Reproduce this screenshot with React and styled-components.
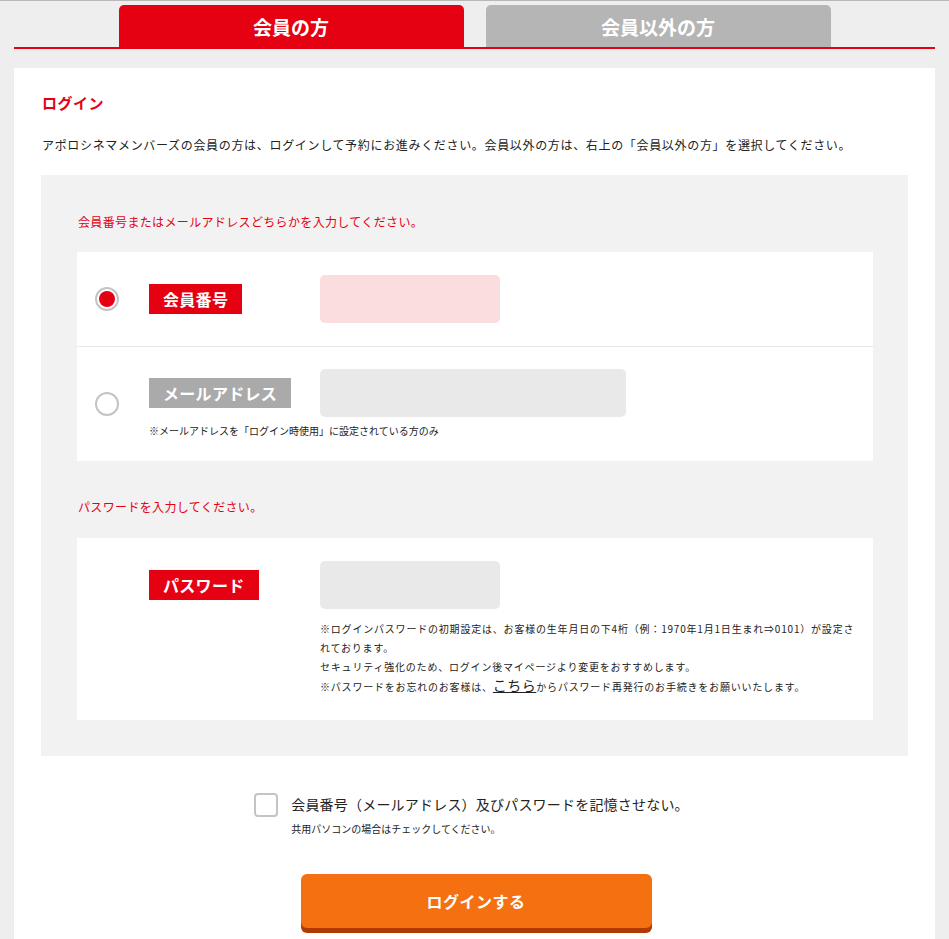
import styled, { createGlobalStyle } from "styled-components";

const GlobalStyle = createGlobalStyle`
  html, body {
    margin: 0;
    padding: 0;
    background: #eeeeee;
    font-family: "Noto Sans CJK JP", "Noto Sans", sans-serif;
    color: #222;
  }
  * { box-sizing: border-box; }
`;

const RED = "#e50012";

const Page = styled.div`
  border-top: 1px solid #b8b8b8;
  padding: 0 14px;
`;

const TabBar = styled.div`
  display: flex;
  justify-content: center;
  gap: 22px;
  padding-top: 4px;
  border-bottom: 2px solid ${RED};
`;

const Tab = styled.div`
  width: 345px;
  height: 42px;
  border-radius: 5px 5px 0 0;
  background: ${(p) => (p.$active ? RED : "#b5b5b5")};
  color: #fff;
  font-size: 19px;
  font-weight: 700;
  display: flex;
  align-items: center;
  justify-content: center;
`;

const Card = styled.div`
  margin-top: 19px;
  background: #fff;
  padding: 24px 27px 24px;
`;

const Title = styled.h2`
  margin: 0 0 0 1px;
  font-size: 15px;
  line-height: 22px;
  font-weight: 700;
  letter-spacing: 0.5px;
  color: ${RED};
`;

const Lead = styled.p`
  margin: 21px 0 0 1px;
  font-size: 12px;
  line-height: 20px;
  letter-spacing: 0.67px;
`;

const FormArea = styled.div`
  margin-top: 20px;
  background: #f2f2f2;
  padding: 38px 35px 36px 36px;
`;

const Guide = styled.p`
  margin: ${(p) => p.$top || 0}px 0 0 1px;
  font-size: 12px;
  line-height: 18px;
  letter-spacing: 0.35px;
  color: ${RED};
`;

const Panel = styled.div`
  margin-top: ${(p) => p.$top}px;
  background: #fff;
`;

const Row = styled.div`
  display: flex;
  align-items: center;
  padding: ${(p) => p.$pad || "0"} 0 ${(p) => p.$pad || "0"} 18px;
  min-height: ${(p) => p.$h}px;
  border-bottom: ${(p) => (p.$line ? "1px solid #e8e8e8" : "none")};
`;

const Radio = styled.span`
  width: 24px;
  height: 24px;
  border-radius: 50%;
  border: 2px solid #c4c4c4;
  background: #fff;
  margin-right: 30px;
  flex-shrink: 0;
  display: flex;
  align-items: center;
  justify-content: center;
  &::after {
    content: "";
    width: 16px;
    height: 16px;
    border-radius: 50%;
    background: ${(p) => (p.$checked ? RED : "transparent")};
  }
`;

const Fields = styled.div`
  display: flex;
  flex-direction: column;
`;

const FieldLine = styled.div`
  display: flex;
  align-items: center;
`;

const BadgeCell = styled.div`
  width: 171px;
  flex-shrink: 0;
`;

const Badge = styled.span`
  display: inline-flex;
  align-items: center;
  height: 30px;
  padding: 0 14px;
  background: ${(p) => (p.$off ? "#aaaaaa" : RED)};
  color: #fff;
  font-size: 16px;
  font-weight: 700;
  letter-spacing: 0.3px;
`;

const Input = styled.div`
  width: ${(p) => p.$w}px;
  height: 48px;
  border-radius: 5px;
  background: ${(p) => (p.$pink ? "#fbdcdf" : "#e9e9e9")};
`;

const SmallNote = styled.p`
  margin: 6px 0 0;
  font-size: 10px;
  line-height: 16px;
  color: #222;
`;

const PassBody = styled.div`
  padding: 23px 0 24px 72px;
`;

const Notes = styled.div`
  margin: 10px 0 0 171px;
  width: 538px;
  font-size: 10px;
  line-height: 19px;
  letter-spacing: 0.8px;
  color: #222;
  p { margin: 0; }
`;

const Link = styled.a`
  font-size: 14px;
  color: #222;
  text-decoration: underline;
  letter-spacing: 0.5px;
`;

const Remember = styled.label`
  display: flex;
  justify-content: center;
  margin-top: 37px;
  padding-right: 6px;
  gap: 13px;
`;

const Check = styled.span`
  width: 24px;
  height: 24px;
  border: 2px solid #c4c4c4;
  border-radius: 4px;
  background: #fff;
  flex-shrink: 0;
`;

const RememberText = styled.div`
  display: flex;
  flex-direction: column;
`;

const RememberMain = styled.span`
  font-size: 14px;
  line-height: 22px;
  letter-spacing: 0.2px;
`;

const RememberSub = styled.span`
  margin-top: 7px;
  font-size: 10px;
  line-height: 14px;
`;

const ButtonWrap = styled.div`
  display: flex;
  justify-content: center;
  margin-top: 38px;
  padding-left: 3px;
`;

const LoginButton = styled.button`
  width: 351px;
  height: 54px;
  border: none;
  border-radius: 6px;
  background: #f57010;
  box-shadow: 0 5px 0 #b13a03;
  color: #fff;
  font-family: inherit;
  font-size: 16px;
  font-weight: 700;
  letter-spacing: 0.5px;
`;

export default function App() {
  return (
    <>
      <GlobalStyle />
      <Page>
        <TabBar>
          <Tab $active>会員の方</Tab>
          <Tab>会員以外の方</Tab>
        </TabBar>
        <Card>
          <Title>ログイン</Title>
          <Lead>
            アポロシネマメンバーズの会員の方は、ログインして予約にお進みください。会員以外の方は、右上の「会員以外の方」を選択してください。
          </Lead>
          <FormArea>
            <Guide>会員番号またはメールアドレスどちらかを入力してください。</Guide>
            <Panel $top={21}>
              <Row $h={95} $line>
                <Radio $checked />
                <FieldLine>
                  <BadgeCell>
                    <Badge>会員番号</Badge>
                  </BadgeCell>
                  <Input $w={180} $pink />
                </FieldLine>
              </Row>
              <Row $h={114} $pad="22px">
                <Radio />
                <Fields>
                  <FieldLine>
                    <BadgeCell>
                      <Badge $off>メールアドレス</Badge>
                    </BadgeCell>
                    <Input $w={306} />
                  </FieldLine>
                  <SmallNote>※メールアドレスを「ログイン時使用」に設定されている方のみ</SmallNote>
                </Fields>
              </Row>
            </Panel>
            <Guide $top={37}>パスワードを入力してください。</Guide>
            <Panel $top={22}>
              <PassBody>
                <FieldLine>
                  <BadgeCell>
                    <Badge>パスワード</Badge>
                  </BadgeCell>
                  <Input $w={180} />
                </FieldLine>
                <Notes>
                  <p>※ログインパスワードの初期設定は、お客様の生年月日の下4桁（例：1970年1月1日生まれ⇒0101）が設定されております。</p>
                  <p>セキュリティ強化のため、ログイン後マイページより変更をおすすめします。</p>
                  <p>
                    ※パスワードをお忘れのお客様は、<Link>こちら</Link>からパスワード再発行のお手続きをお願いいたします。
                  </p>
                </Notes>
              </PassBody>
            </Panel>
          </FormArea>
          <Remember>
            <Check />
            <RememberText>
              <RememberMain>会員番号（メールアドレス）及びパスワードを記憶させない。</RememberMain>
              <RememberSub>共用パソコンの場合はチェックしてください。</RememberSub>
            </RememberText>
          </Remember>
          <ButtonWrap>
            <LoginButton>ログインする</LoginButton>
          </ButtonWrap>
        </Card>
      </Page>
    </>
  );
}
